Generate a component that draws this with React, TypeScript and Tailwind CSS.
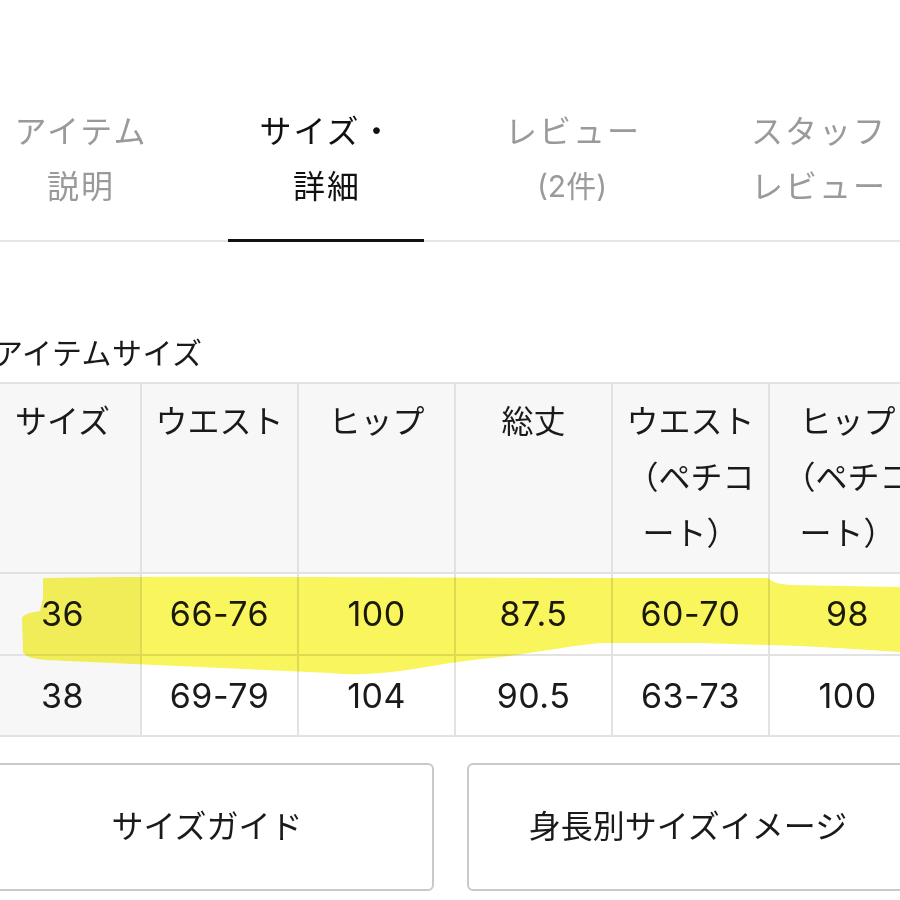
import React from "react";

const tabs = [
  { l1: "アイテム", l2: "説明", active: false },
  { l1: "サイズ・", l2: "詳細", active: true },
  { l1: "レビュー", l2: "(2件)", active: false },
  { l1: "スタッフ", l2: "レビュー", active: false },
];

const headers = [
  "サイズ",
  "ウエスト",
  "ヒップ",
  "総丈",
  "ウエスト（ペチコート）",
  "ヒップ（ペチコート）",
];

const rows = [
  ["36", "66-76", "100", "87.5", "60-70", "98"],
  ["38", "69-79", "104", "90.5", "63-73", "100"],
];

export default function App() {
  return (
    <div className="relative w-[900px] h-[900px] overflow-hidden bg-white text-[#1a1a1a] font-['Inter','Noto_Sans_CJK_JP',sans-serif]">
      {/* Tabs */}
      <div className="flex ml-[-43px] pt-[104px] border-b-2 border-[#e6e6e6]">
        {tabs.map((t, i) => (
          <div key={i} className="w-[246px] shrink-0 px-[25px]">
            <div
              className={
                "text-center text-[32px] leading-[55px] pb-[25px] mb-[-2px] border-b-[3px] " +
                (t.active
                  ? "border-[#111111] text-[#111111]"
                  : "border-transparent text-[#9a9a9a]")
              }
            >
              <div className="tracking-[2px] pl-[2px]">{t.l1}</div>
              {t.l2 === "(2件)" ? (
                <div className="text-[30px]">{t.l2}</div>
              ) : (
                <div className="tracking-[2px] pl-[2px]">{t.l2}</div>
              )}
            </div>
          </div>
        ))}
      </div>

      {/* Heading */}
      <div className="mt-[91px] ml-[-7px] text-[30px] leading-[40px] tracking-[0.5px] text-[#1a1a1a]">
        アイテムサイズ
      </div>

      {/* Table */}
      <table className="mt-[9px] ml-[-17px] table-fixed border-collapse w-[942px]">
        <colgroup>
          {headers.map((_, i) => (
            <col key={i} className="w-[157px]" />
          ))}
        </colgroup>
        <thead>
          <tr>
            {headers.map((h, i) => (
              <th
                key={i}
                className="border-2 border-[#e2e2e2] bg-[#f7f7f7] align-top px-[8px] pt-[10px] pb-[10px] text-[32px] leading-[56px] font-normal text-center text-[#1a1a1a] h-[168px]"
              >
                {h}
              </th>
            ))}
          </tr>
        </thead>
        <tbody>
          {rows.map((r, ri) => (
            <tr key={ri}>
              {r.map((c, ci) =>
                ci === 0 ? (
                  <th
                    key={ci}
                    className={
                      "border-2 border-[#e2e2e2] bg-[#f7f7f7] px-[8px] text-[34px] leading-[56px] tracking-[0.5px] font-normal text-center text-[#1a1a1a] " +
                      (ri === 0 ? "py-[12px]" : "pt-[12px] pb-[11px]")
                    }
                  >
                    {c}
                  </th>
                ) : (
                  <td
                    key={ci}
                    className={
                      "border-2 border-[#e2e2e2] bg-white px-[8px] text-[34px] leading-[56px] tracking-[0.5px] text-center text-[#1a1a1a] " +
                      (ri === 0 ? "py-[12px]" : "pt-[12px] pb-[11px]")
                    }
                  >
                    {c}
                  </td>
                )
              )}
            </tr>
          ))}
        </tbody>
      </table>

      {/* Buttons */}
      <div className="flex gap-[33px] ml-[-20px] mt-[26px]">
        <div className="w-[454px] h-[128px] shrink-0 border-2 border-[#c9c9c9] rounded-[6px] flex items-center justify-center text-[32px] text-[#1a1a1a]">
          サイズガイド
        </div>
        <div className="w-[442px] h-[128px] shrink-0 border-2 border-[#c9c9c9] rounded-[6px] flex items-center justify-center text-[32px] text-[#1a1a1a]">
          身長別サイズイメージ
        </div>
      </div>

      {/* Highlighter stroke */}
      <svg
        className="absolute inset-0 pointer-events-none mix-blend-multiply"
        width="900"
        height="900"
        viewBox="0 0 900 900"
      >
        <path
          d="M43,578 C150,576 250,577 300,577 L600,578 L768,578 C772,582 778,584 790,585 L900,587 L900,652 C870,650 840,648 800,646 L700,643 L600,643 C570,646 540,652 500,657 C470,660 450,663 420,668 C390,673 360,676 330,673 L200,667 L67,661 C40,660 26,659 23,652 L22,618 C24,613 35,612 40,611 L43,598 Z"
          fill="#f9f55c"
        />
      </svg>
    </div>
  );
}
